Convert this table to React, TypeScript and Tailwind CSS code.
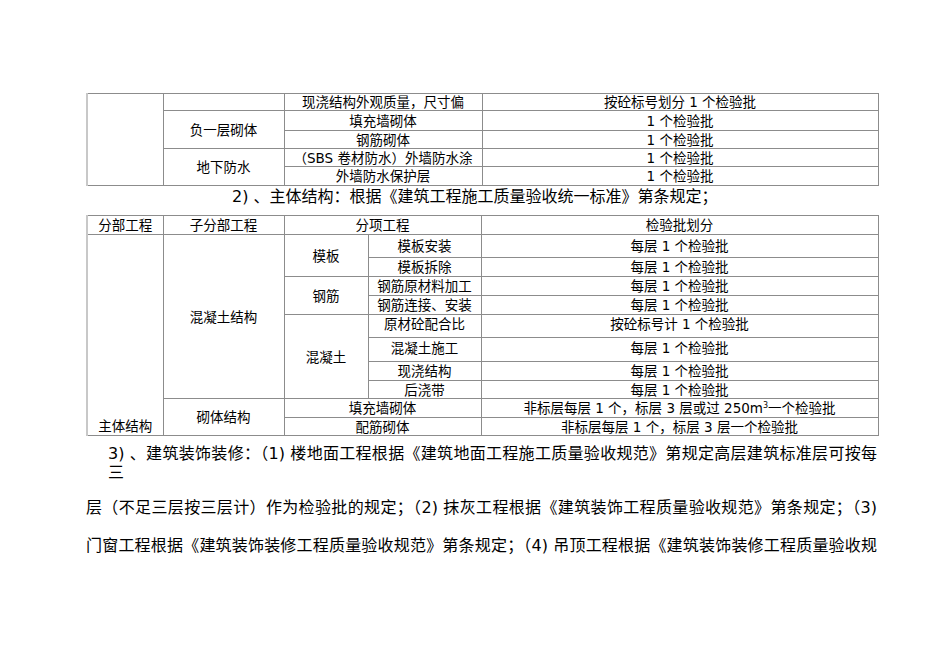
import React from "react";

const td = "border border-[#8c8c8c] p-0 text-center align-middle leading-[16px]";
const first = "border border-[#8c8c8c] border-l-2 border-l-[#c8c8c8] p-0";

const TopTable = () => (
    <table className="table-fixed border-collapse w-[791px] text-[13.5px]">
        <colgroup>
            <col className="w-[76px]" />
            <col className="w-[121px]" />
            <col className="w-[198px]" />
            <col className="w-[396px]" />
        </colgroup>
        <tbody>
            <tr className="h-[17px]">
                <td rowSpan={5} className={first}></td>
                <td className={td}></td>
                <td className={td}>现浇结构外观质量，尺寸偏</td>
                <td className={td}>按砼标号划分 1 个检验批</td>
            </tr>
            <tr className="h-[20px]">
                <td rowSpan={2} className={td}>负一层砌体</td>
                <td className={td}>填充墙砌体</td>
                <td className={td}>1 个检验批</td>
            </tr>
            <tr className="h-[18px]">
                <td className={td}>钢筋砌体</td>
                <td className={td}>1 个检验批</td>
            </tr>
            <tr className="h-[18px]">
                <td rowSpan={2} className={td}>地下防水</td>
                <td className={td}>（SBS 卷材防水）外墙防水涂</td>
                <td className={td}>1 个检验批</td>
            </tr>
            <tr className="h-[19px]">
                <td className={td}>外墙防水保护层</td>
                <td className={td}>1 个检验批</td>
            </tr>
        </tbody>
    </table>
);

const MainTable = () => (
    <table className="table-fixed border-collapse w-[791px] text-[13.5px]">
        <colgroup>
            <col className="w-[76px]" />
            <col className="w-[121px]" />
            <col className="w-[84px]" />
            <col className="w-[113px]" />
            <col className="w-[397px]" />
        </colgroup>
        <tbody>
            <tr className="h-[19px]">
                <td className={first + " text-center leading-[16px]"}>分部工程</td>
                <td className={td}>子分部工程</td>
                <td colSpan={2} className={td}>分项工程</td>
                <td className={td}>检验批划分</td>
            </tr>
            <tr className="h-[23px]">
                <td rowSpan={10} className={first + " text-center align-bottom leading-[18px]"}>主体结构</td>
                <td rowSpan={8} className={td}>混凝土结构</td>
                <td rowSpan={2} className={td}>模板</td>
                <td className={td}>模板安装</td>
                <td className={td}>每层 1 个检验批</td>
            </tr>
            <tr className="h-[19px]">
                <td className={td}>模板拆除</td>
                <td className={td}>每层 1 个检验批</td>
            </tr>
            <tr className="h-[19px]">
                <td rowSpan={2} className={td}>钢筋</td>
                <td className={td}>钢筋原材料加工</td>
                <td className={td}>每层 1 个检验批</td>
            </tr>
            <tr className="h-[19px]">
                <td className={td}>钢筋连接、安装</td>
                <td className={td}>每层 1 个检验批</td>
            </tr>
            <tr className="h-[23px]">
                <td rowSpan={4} className={td}>混凝土</td>
                <td className={td + " pb-[4px]"}>原材砼配合比</td>
                <td className={td + " pb-[4px]"}>按砼标号计 1 个检验批</td>
            </tr>
            <tr className="h-[24px]">
                <td className={td + " pb-[4px]"}>混凝土施工</td>
                <td className={td + " pb-[4px]"}>每层 1 个检验批</td>
            </tr>
            <tr className="h-[19px]">
                <td className={td}>现浇结构</td>
                <td className={td}>每层 1 个检验批</td>
            </tr>
            <tr className="h-[18px]">
                <td className={td}>后浇带</td>
                <td className={td}>每层 1 个检验批</td>
            </tr>
            <tr className="h-[19px]">
                <td rowSpan={2} className={td}>砌体结构</td>
                <td colSpan={2} className={td}>填充墙砌体</td>
                <td className={td}>
                    非标层每层 1 个，标层 3 层或过 250m
                    <span className="relative -top-[5px] text-[8px] leading-none">3</span>
                    一个检验批
                </td>
            </tr>
            <tr className="h-[18px]">
                <td colSpan={2} className={td}>配筋砌体</td>
                <td className={td}>非标层每层 1 个，标层 3 层一个检验批</td>
            </tr>
        </tbody>
    </table>
);

export default function App() {
    return (
        <div
            className="w-[950px] h-[672px] bg-white text-black overflow-hidden"
            style={{ fontFamily: '"DejaVu Sans", "Noto Sans CJK SC", sans-serif' }}
        >
            <div className="pl-[86px] pt-[93px] w-[877px]">
                <TopTable />
                <div className="h-[29px] pl-[146px] pt-[1px] text-[16px] leading-[20px]">
                    2) 、主体结构：根据《建筑工程施工质量验收统一标准》第条规定；
                </div>
                <MainTable />
                <div className="text-[16px] leading-[17px] [text-align-last:justify] text-justify">
                    <div className="pl-[22px] pt-[9px]">
                        3) 、建筑装饰装修：（1) 楼地面工程根据《建筑地面工程施工质量验收规范》第规定高层建筑标准层可按每
                    </div>
                    <div className="pl-[22px] pt-[2px] [text-align-last:left]">三</div>
                    <div className="mt-[18px]">
                        层（不足三层按三层计）作为检验批的规定；（2) 抹灰工程根据《建筑装饰工程质量验收规范》第条规定；（3)
                    </div>
                    <div className="mt-[21px]">
                        门窗工程根据《建筑装饰装修工程质量验收规范》第条规定；（4) 吊顶工程根据《建筑装饰装修工程质量验收规
                    </div>
                </div>
            </div>
        </div>
    );
}
